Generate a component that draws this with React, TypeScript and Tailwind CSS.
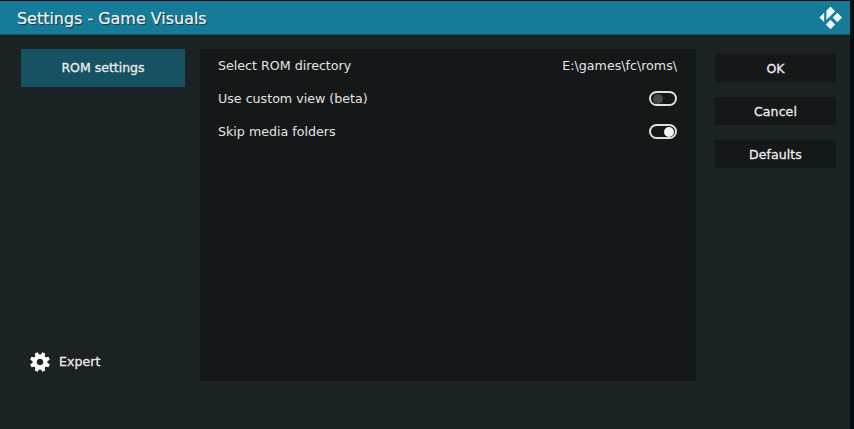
import type { ReactNode } from "react";

function Toggle({ on }: { on: boolean }) {
  return (
    <span className={`flex h-[15px] w-7 items-center rounded-full border-2 border-[#dedfdf] px-[1.5px] ${on ? "justify-end" : "justify-start"}`}>
      <span className={`size-[10px] rounded-full ${on ? "bg-[#f3f3f3]" : "bg-[#484a4a]"}`} />
    </span>
  );
}

function Row({ label, children }: { label: string; children: ReactNode }) {
  return (
    <div className="flex h-[33px] items-center justify-between text-[12.65px] text-[#e3e4e4]">
      <span className="pt-px">{label}</span>
      {children}
    </div>
  );
}

function KodiLogo() {
  return (
    <svg width="24" height="24" viewBox="0 0 24 24" fill="#edf7f9" aria-hidden="true">
      <path d="M11.5 0.6 16.2 5.3 7.4 14V4.7Z" />
      <path d="M5.2 6.6V16.2L0.4 11.4Z" />
      <path d="M18.3 6.8 23 11.5 18.3 16.2 13.6 11.5Z" />
      <path d="M11.5 13.8 16.2 18.5 11.5 23.2 6.8 18.5Z" />
    </svg>
  );
}

function Gear() {
  const teeth = [22.5, 67.5, 112.5, 157.5, 202.5, 247.5, 292.5, 337.5];
  return (
    <svg width="20" height="20" viewBox="-10 -10 20 20" aria-hidden="true">
      <circle r="5.4" fill="none" stroke="#fff" strokeWidth="4.2" />
      {teeth.map((a) => (
        <path key={a} d="M-2.1-6.8-1.6-9.9H1.6L2.1-6.8Z" fill="#fff" transform={`rotate(${a})`} />
      ))}
    </svg>
  );
}

export default function App() {
  return (
    <div className="h-[429px] w-[854px] overflow-hidden bg-[#020e11] pt-px font-['DejaVu_Sans',sans-serif] whitespace-nowrap">
      <div className="flex h-[428px] w-[850px] flex-col bg-[#1b2224]">
        <header className="flex h-[34px] items-center justify-between border-b border-[#175464] bg-[#167b98] pr-[7px] pl-[17px]">
          <h1 className="pt-[2px] text-[15.95px] text-[#f2f2f2] [-webkit-text-stroke:0.2px_#f2f2f2] [text-shadow:1px_1px_1px_#12343e]">Settings - Game Visuals</h1>
          <KodiLogo />
        </header>
        <main className="flex pt-[14px] pl-[21px]">
          <aside className="flex h-[332px] w-[164px] flex-col justify-between">
            <button className="h-[38px] bg-[#165262] text-[12.5px] text-[#ececec] [-webkit-text-stroke:0.3px_#ececec]">ROM settings</button>
            <div className="flex items-center gap-[9px] pb-[9px] pl-[9px] text-[12.5px] text-[#ececec] [-webkit-text-stroke:0.3px_#ececec]">
              <Gear />
              <span className="pt-[2px] tracking-[0.1px]">Expert</span>
            </div>
          </aside>
          <section className="ml-[15px] h-[332px] w-[496px] rounded-[1px] bg-[#141819] pr-[19px] pl-[18px]">
            <Row label="Select ROM directory"><span className="pt-px">E:\games\fc\roms\</span></Row>
            <Row label="Use custom view (beta)"><Toggle on={false} /></Row>
            <Row label="Skip media folders"><Toggle on /></Row>
          </section>
          <nav className="ml-[19px] flex w-[121px] flex-col gap-[15px] pt-[5px]">
            {["OK", "Cancel", "Defaults"].map((t) => (
              <button key={t} className="h-7 rounded-[1px] bg-[#141819] pt-[2px] text-[12.5px] text-[#ececec] tracking-[0.1px] [-webkit-text-stroke:0.3px_#ececec]">{t}</button>
            ))}
          </nav>
        </main>
      </div>
    </div>
  );
}
